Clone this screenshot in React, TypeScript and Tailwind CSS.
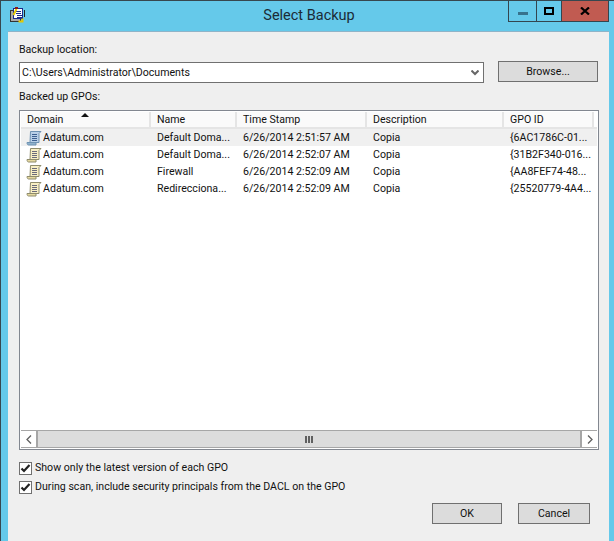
const F = 'font-["Roboto","Liberation_Sans",sans-serif]';

function Scroll({ blue }: { blue?: boolean }) {
  const fill = blue ? "#b9d0e8" : "#f8efc4";
  const roll = blue ? "#8fb2cc" : "#e6d9a0";
  const edge = blue ? "#6f93b3" : "#8f8c6c";
  return (
    <svg width="16" height="16" viewBox="0 0 16 16" className="shrink-0">
      <path d="M4.500 1.500h10.500l-2 2v9H4z" fill={fill} stroke={edge} />
      <path d="M1 12.500h9v2.500H2.500C1.500 15 1 14 1 12.500z" fill={roll} stroke={edge} />
      <path d="M6 4.500h5M6 6.500h5M6 8.500h5M6 10.500h5" stroke={blue ? "#3d6090" : "#6a6a7a"} />
    </svg>
  );
}

const cols = [
  { w: "w-[130px]", t: "Domain", p: "pl-[6px]" },
  { w: "w-[86px]", t: "Name", p: "pl-[6px]" },
  { w: "w-[130px]", t: "Time Stamp", p: "pl-[6px]" },
  { w: "w-[137px]", t: "Description", p: "pl-[6px]" },
  { w: "w-[90px]", t: "GPO ID", p: "pl-[6px]" },
];

const rows = [
  ["Default Doma...", "6/26/2014 2:51:57 AM", "{6AC1786C-01..."],
  ["Default Doma...", "6/26/2014 2:52:07 AM", "{31B2F340-016..."],
  ["Firewall", "6/26/2014 2:52:09 AM", "{AA8FEF74-48..."],
  ["Redirecciona...", "6/26/2014 2:52:09 AM", "{25520779-4A4..."],
];

function Btn({ w, children }: { w: string; children: string }) {
  return (
    <div className={`${w} h-[21px] bg-[#dcdcdc] border border-[#707070] flex items-center justify-center text-[#111]`}>
      {children}
    </div>
  );
}

function Check({ label }: { label: string }) {
  return (
    <div className="flex items-center gap-[3px] h-[14px]">
      <div className="w-[13px] h-[13px] border border-[#707070] bg-white flex items-center justify-center">
        <svg width="11" height="11" viewBox="0 0 11 11">
          <path d="M1.500 5.500l2.500 2.500 5.500-6" fill="none" stroke="#222" strokeWidth="2.200" />
        </svg>
      </div>
      <span className="text-[#111]">{label}</span>
    </div>
  );
}

export default function App() {
  return (
    <div className={`${F} w-[614px] h-[541px] bg-[#65c9ea] border-t border-l border-[#37474f] flex flex-col overflow-hidden text-[10.6px] leading-[14px] text-[#111]`}>
      <div className="h-[30px] shrink-0 flex items-start">
        <svg width="16" height="16" viewBox="0 0 16 16" className="ml-[9px] mt-[6px] shrink-0">
          <rect x="0.500" y="3.500" width="10" height="11" fill="#a8a8a8" stroke="#333" />
          <rect x="3.500" y="1.500" width="9" height="10" fill="#fff" stroke="#1b2a8a" />
          <path d="M6 4.500h5M6 6.500h5M7 8.500h5M7 10.500h5" stroke="#1b2a8a" />
          <path d="M3.500 8l3-6" stroke="#e6c800" strokeWidth="2" />
          <rect x="5" y="0" width="3" height="2" fill="#8a1a1a" />
          <path d="M8.500 14.500h4v-3" stroke="#e6c800" strokeWidth="2" fill="none" />
          <path d="M14.500 3v7" stroke="#222" />
        </svg>
        <div className="flex-1 text-center text-[14.5px] leading-[20px] pt-[5px] text-[#1b2b36] pl-[84px]">Select Backup</div>
        <div className="flex h-[21px] mr-[5px] border-b border-x border-[#33454f]">
          <div className="w-[28px] flex items-center justify-center border-r border-[#33454f]">
            <div className="w-[10px] h-[3px] mt-[4px] bg-[#37728d]" />
          </div>
          <div className="w-[25px] flex items-center justify-center border-r border-[#33454f]">
            <div className="w-[10px] h-[8px] border-2 border-black mb-[1px]" />
          </div>
          <div className="w-[46px] bg-[#c15b51] flex items-center justify-center">
            <svg width="10" height="8" viewBox="0 0 10 8" className="mb-[1px]">
              <path d="M1 0.500l8 7M9 0.500l-8 7" stroke="#000" strokeWidth="2.200" />
            </svg>
          </div>
        </div>
      </div>
      <div className="flex-1 ml-[7px] mr-[5px] bg-[#efefef] border-t border-[#8fb4c8] pt-[11px] pl-[11px] pr-[10px] flex flex-col">
        <div className="h-[14px]">Backup location:</div>
        <div className="flex items-start mt-[4px]">
          <div className="w-[465px] h-[21px] mt-[1px] bg-white border border-[#707070] flex items-center pl-[2px] pr-[4px] justify-between">
            <span>C:\Users\Administrator\Documents</span>
            <svg width="8" height="6" viewBox="0 0 8 6">
              <path d="M0.500 0.500L4 4l3.500-3.500" fill="none" stroke="#666" strokeWidth="2" />
            </svg>
          </div>
          <div className="ml-[14px]"><Btn w="w-[100px]">Browse...</Btn></div>
        </div>
        <div className="h-[14px] mt-[7px]">Backed up GPOs:</div>
        <div className="mt-[6px] w-[580px] h-[340px] bg-white border border-[#828790] p-px flex flex-col">
          <div className="h-[17px] flex shrink-0 border-b-2 border-[#e5e5e5]">
            {cols.map((c, i) => (
              <div key={c.t} className={`${c.w} ${c.p} relative border-r-2 border-[#e5e5e5] bg-[#fafafa] flex items-center`}>
                {c.t}
                {i === 0 && (
                  <svg width="8" height="4" viewBox="0 0 8 4" className="absolute left-[60px] top-[1px]">
                    <path d="M0 4L4 0l4 4z" fill="#111" />
                  </svg>
                )}
              </div>
            ))}
          </div>
          <div className="flex-1">
            {rows.map((r, i) => (
              <div key={i} className={`flex h-[17px] items-center ${i === 0 ? "bg-[#f0f0f0]" : ""}`}>
                <div className="w-[130px] flex items-center pl-[5px] gap-[1px]">
                  <Scroll blue={i === 0} />
                  <span>Adatum.com</span>
                </div>
                <div className="w-[87px] pl-[6px] whitespace-nowrap">{r[0]}</div>
                <div className="w-[130px] pl-[5px] whitespace-nowrap">{r[1]}</div>
                <div className="w-[138px] pl-[5px]">Copia</div>
                <div className="pl-[4px] whitespace-nowrap">{r[2]}</div>
              </div>
            ))}
          </div>
          <div className="h-[18px] flex shrink-0 bg-[#dcdcdc] border-t border-[#a6a6a6] border-b">
            <div className="w-[17px] bg-white border-r-2 border-[#a6a6a6] flex items-center justify-center">
              <svg width="6" height="9" viewBox="0 0 6 9"><path d="M5 0.500l-4 4 4 4" fill="none" stroke="#606060" strokeWidth="1.300" /></svg>
            </div>
            <div className="flex-1 flex items-center justify-center gap-px">
              <div className="w-[2px] h-[7px] bg-[#606060]" />
              <div className="w-[2px] h-[7px] bg-[#606060]" />
              <div className="w-[2px] h-[7px] bg-[#606060]" />
            </div>
            <div className="w-[17px] bg-white border-l-2 border-[#a6a6a6] flex items-center justify-center">
              <svg width="6" height="9" viewBox="0 0 6 9"><path d="M1 0.500l4 4-4 4" fill="none" stroke="#606060" strokeWidth="1.300" /></svg>
            </div>
          </div>
        </div>
        <div className="mt-[11px] flex flex-col gap-[5px]">
          <Check label="Show only the latest version of each GPO" />
          <Check label="During scan, include security principals from the DACL on the GPO" />
        </div>
        <div className="flex justify-end gap-[16px] mt-[9px] pr-[9px]">
          <Btn w="w-[70px]">OK</Btn>
          <Btn w="w-[72px]">Cancel</Btn>
        </div>
      </div>
    </div>
  );
}
